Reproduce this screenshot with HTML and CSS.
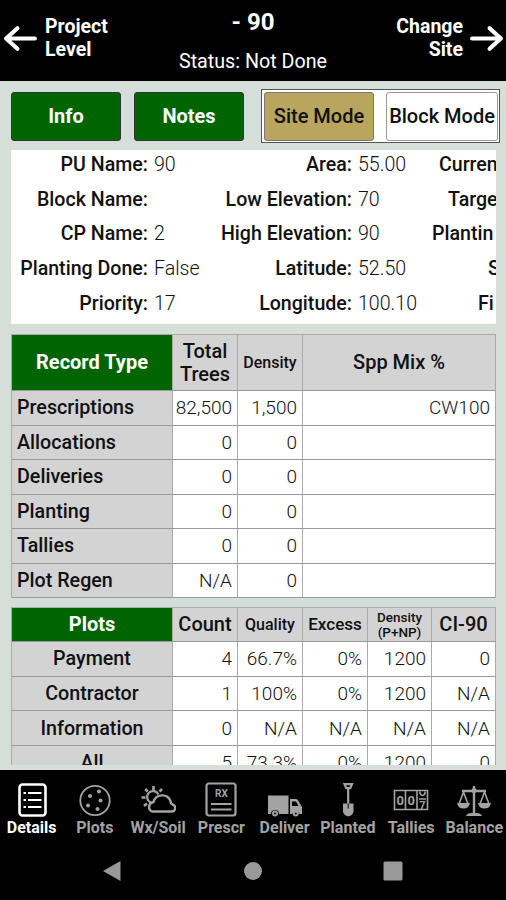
FILE: index.html
```html
<!DOCTYPE html>
<html lang="en">
<head>
    <meta charset="UTF-8">
    <meta name="viewport" content="width=device-width, initial-scale=1.0">
    <title>Site Details</title>
    <link rel="stylesheet" href="styles.css">
</head>
<body>
    <header class="top-bar">
        <div class="top-link">
            <svg class="arrow" viewBox="0 0 34 26"><path d="M31 13H3M14 3L3 13l11 10"/></svg>
            <span>Project<br>Level</span>
        </div>
        <div class="top-title">
            <h1>- 90</h1>
            <p>Status: Not Done</p>
        </div>
        <div class="top-link right">
            <span>Change<br>Site</span>
            <svg class="arrow" viewBox="0 0 34 26"><path d="M3 13h28M20 3l11 10-11 10"/></svg>
        </div>
    </header>

    <main class="content">
        <div class="buttons">
            <button class="btn green">Info</button>
            <button class="btn green">Notes</button>
            <div class="mode-switch">
                <button class="btn gold">Site Mode</button>
                <button class="btn white">Block Mode</button>
            </div>
        </div>

        <div class="info">
            <b>PU Name:</b><span>90</span><b>Area:</b><span>55.00</span><b class="cut c1">Curren</b>
            <b>Block Name:</b><span></span><b>Low Elevation:</b><span>70</span><b class="cut c2">Targe</b>
            <b>CP Name:</b><span>2</span><b>High Elevation:</b><span>90</span><b class="cut c3">Plantin</b>
            <b>Planting Done:</b><span>False</span><b>Latitude:</b><span>52.50</span><b class="cut c4">S</b>
            <b>Priority:</b><span>17</span><b>Longitude:</b><span>100.10</span><b class="cut c5">Fi</b>
        </div>

        <div class="grid records">
            <div class="head title">Record Type</div><div class="head">Total<br>Trees</div><div class="head small">Density</div><div class="head">Spp Mix %</div>
            <div class="name">Prescriptions</div><div>82,500</div><div>1,500</div><div>CW100</div>
            <div class="name">Allocations</div><div>0</div><div>0</div><div></div>
            <div class="name">Deliveries</div><div>0</div><div>0</div><div></div>
            <div class="name">Planting</div><div>0</div><div>0</div><div></div>
            <div class="name">Tallies</div><div>0</div><div>0</div><div></div>
            <div class="name">Plot Regen</div><div>N/A</div><div>0</div><div></div>
        </div>

        <div class="plots-wrap">
            <div class="grid plots">
                <div class="head title">Plots</div><div class="head">Count</div><div class="head small">Quality</div><div class="head medium">Excess</div><div class="head tiny">Density<br>(P+NP)</div><div class="head">CI-90</div>
                <div class="name">Payment</div><div>4</div><div>66.7%</div><div>0%</div><div>1200</div><div>0</div>
                <div class="name">Contractor</div><div>1</div><div>100%</div><div>0%</div><div>1200</div><div>N/A</div>
                <div class="name">Information</div><div>0</div><div>N/A</div><div>N/A</div><div>N/A</div><div>N/A</div>
                <div class="name">All</div><div>5</div><div>73.3%</div><div>0%</div><div>1200</div><div>0</div>
            </div>
        </div>
    </main>

    <nav class="tabs">
        <div class="tab active">
            <svg viewBox="0 0 36 36"><rect x="5.500" y="2.500" width="26" height="31" rx="3" stroke-width="2.600"/><path d="M14 11h13.500M14 18h13.500M14 25h13.500" stroke-width="2.200"/><path d="M9.500 11h2.500M9.500 18h2.500M9.500 25h2.500" stroke-width="2"/></svg>
            <span>Details</span>
        </div>
        <div class="tab">
            <svg viewBox="0 0 36 36"><circle cx="18" cy="18.500" r="14.700" stroke-width="1.800"/><g class="solid"><circle cx="13" cy="14" r="2"/><circle cx="22" cy="9.500" r="2"/><circle cx="23.500" cy="18.500" r="2"/><circle cx="11" cy="23.500" r="2"/><circle cx="20.500" cy="27" r="2"/></g></svg>
            <span>Plots</span>
        </div>
        <div class="tab">
            <svg viewBox="0 0 36 36"><path d="M10.500 20.500a6 6 0 1 1 8-8" stroke-width="2.200"/><path d="M13.500 4v4M5.200 7l2.500 2.500M22 7l-2.500 2.500M1.500 15.500h4M4 24l3-2.500" stroke-width="2.600"/><path d="M12 29.500h20a3.500 3.500 0 0 0 1.500-6.500q-3-1-3-4a9 9 0 0 0-17 1 5 5 0 0 0-1.500 9.500z" stroke-width="2.400"/></svg>
            <span>Wx/Soil</span>
        </div>
        <div class="tab">
            <svg viewBox="0 0 36 36"><rect x="3.500" y="1.500" width="29" height="32" rx="2.500" stroke-width="2.200"/><text x="18.500" y="15" font-size="10">RX</text><path d="M8 22h20.500M8 27.500h20.500" stroke-width="2.200"/></svg>
            <span>Prescr</span>
        </div>
        <div class="tab">
            <svg viewBox="0 0 36 36"><g class="solid"><path d="M1 13.500h20.500V32H12a4 4 0 0 0-8 0H1zM23 17h6q2 0 3 3l3 5v7h-2.500a4 4 0 0 0-7.500 0h-2z"/><circle cx="8" cy="31.500" r="3"/><circle cx="28.700" cy="31.500" r="3"/></g><path class="hole" d="M25 19.500h4l2.500 4.500H25z"/><circle class="hole" cx="8" cy="31.500" r="1"/><circle class="hole" cx="28.700" cy="31.500" r="1"/></svg>
            <span>Deliver</span>
        </div>
        <div class="tab">
            <svg viewBox="0 0 36 36"><path d="M14.500 2.200h7.500l-1.700 4h-4.100zM18.200 6v18" stroke-width="2.200"/><path class="solid" d="M13 21.500h10.500V30q-1 3.500-5.200 4.500Q14 33.500 13 30z"/><path class="hole" d="M17.700 21.500h1v5h-1z"/></svg>
            <span>Planted</span>
        </div>
        <div class="tab">
            <svg viewBox="0 0 36 36"><path d="M1.500 8.500h33v19h-33zM12.500 8.500v19M24 8.500v19" stroke-width="1.600"/><text x="7.200" y="22.500" font-size="13">0</text><text x="18.300" y="22.500" font-size="13">0</text><text x="29.500" y="27" font-size="11">7</text><path d="M27 9.500v2q2.500 4 5 0v-2M26 17h7" stroke-width="1.600"/></svg>
            <span>Tallies</span>
        </div>
        <div class="tab">
            <svg viewBox="0 0 36 36"><path d="M18 4v27M6 9h24" stroke-width="2.400"/><path d="M7.500 10L3 22M7.500 10L12 22M28.500 10L24 22M28.500 10L33 22" stroke-width="1.600"/><path class="solid" d="M1 21h13q-1 5.500-6.500 5.500T1 21zM22 21h13q-1 5.500-6.500 5.500T22 21zM10 34q1-3 6-3h4q5 0 6 3z"/><circle class="solid" cx="18" cy="8.500" r="2.500"/></svg>
            <span>Balance</span>
        </div>
    </nav>

    <footer class="system-bar">
        <svg viewBox="0 0 20 22"><path d="M18.500 1v20L1 11z"/></svg>
        <svg viewBox="0 0 20 22"><circle cx="10" cy="11" r="9"/></svg>
        <svg viewBox="0 0 20 22"><rect x=".5" y="1.500" width="19" height="19" rx="1.500"/></svg>
    </footer>
</body>
</html>
```
FILE: styles.css
```css
* {
    box-sizing: border-box;
}
body {
    margin: 0;
    width: 506px;
    height: 900px;
    display: flex;
    flex-direction: column;
    overflow: hidden;
    background: #000;
    color: #111;
    font-family: Roboto, sans-serif;
    font-size: 19px;
    white-space: nowrap;
}
.top-bar {
    height: 81px;
    display: grid;
    grid-template-columns: 150px 206px 150px;
    color: #fff;
}
.top-link {
    display: flex;
    align-items: center;
    gap: 7px;
    padding: 0 0 5px 3px;
    font-size: 19.5px;
    font-weight: 700;
    line-height: 23px;
}
.right {
    justify-content: flex-end;
    text-align: right;
    padding: 0 2px 5px 0;
}
.right .arrow {
    margin-left: -1px;
}
.arrow {
    width: 35px;
    height: 27px;
    fill: none;
    stroke: #fff;
    stroke-width: 4;
    stroke-linecap: round;
    stroke-linejoin: round;
}
.top-title {
    text-align: center;
}
.top-title h1 {
    margin: 8px 0 0;
    font-size: 24px;
    line-height: 29px;
}
.top-title p {
    margin: 13px 0 0;
    font-size: 19.7px;
    line-height: 24px;
}
.content {
    height: 689px;
    padding: 8px 10px 5px 11px;
    background: #d6deda;
    overflow: hidden;
}
.buttons {
    display: flex;
    height: 54px;
    align-items: center;
}
.btn {
    flex: none;
    width: 110px;
    height: 49px;
    padding: 0;
    border: 1px solid #333;
    border-radius: 3px;
    font: 500 20px Roboto, sans-serif;
    color: #111;
}
.green {
    margin-right: 13px;
    background: #006400;
    color: #fff;
    font-weight: 700;
}
.mode-switch {
    display: flex;
    justify-content: space-between;
    align-items: center;
    flex: none;
    width: 239px;
    height: 54px;
    margin-left: 4px;
    padding: 0 1px 0 2px;
    background: #fff;
    border: 1px solid #555;
}
.gold {
    background: #b9a55d;
    border-color: #777;
}
.white {
    width: 112px;
    background: #fff;
    border-color: #999;
}
.info {
    display: grid;
    grid-template-columns: 137px 68px 136px 73px 71px;
    grid-auto-rows: 34.7px;
    height: 174px;
    margin-top: 7px;
    overflow: hidden;
    background: #fff;
    font-size: 19.6px;
    line-height: 29px;
}
.info b {
    font-weight: 500;
    text-align: right;
}
.info span {
    padding-left: 6px;
    font-weight: 300;
}
.info .cut {
    text-align: left;
    overflow: hidden;
}
.info .c1 {
    padding-left: 14px;
}
.info .c2 {
    padding-left: 23px;
}
.info .c3 {
    padding-left: 7px;
}
.info .c4 {
    padding-left: 63px;
}
.info .c5 {
    padding-left: 53px;
}
.grid {
    display: grid;
    width: 485px;
    border-top: 1px solid #aaa;
    border-left: 1px solid #aaa;
    background: #fff;
}
.grid > div {
    display: flex;
    align-items: center;
    justify-content: flex-end;
    padding-right: 5px;
    border-right: 1px solid #aaa;
    border-bottom: 1px solid #999;
    font-weight: 300;
}
.grid .head {
    justify-content: center;
    padding: 0;
    background: #d3d3d3;
    font-size: 20px;
    font-weight: 500;
    line-height: 23px;
    text-align: center;
}
.grid .title {
    background: #006400;
    color: #fff;
    font-weight: 700;
}
.grid .name {
    background: #d3d3d3;
    font-size: 19.7px;
    font-weight: 500;
}
.grid .small {
    font-size: 16px;
}
.grid .medium {
    font-size: 17px;
}
.grid .tiny {
    font-size: 13.5px;
    line-height: 15px;
}
.records {
    margin-top: 10px;
    grid-template-columns: 161px 65px 65px 193px;
    grid-template-rows: 56px repeat(6, 34.5px);
}
.records .name {
    justify-content: flex-start;
    padding-left: 5px;
}
.plots-wrap {
    height: 158px;
    margin-top: 9px;
    overflow: hidden;
}
.plots {
    grid-template-columns: 161px 65px 65px 65px 64px 64px;
    grid-template-rows: 34px repeat(4, 34.7px);
}
.plots .name {
    justify-content: center;
    padding: 0;
}
.tabs {
    height: 72px;
    display: grid;
    grid-template-columns: repeat(8, 1fr);
    color: #a3a3a3;
}
.tab {
    display: flex;
    flex-direction: column;
    align-items: center;
    padding-top: 12px;
    font-size: 16px;
    font-weight: 700;
    line-height: 19px;
}
.tab svg {
    width: 36px;
    height: 36px;
    flex: none;
    fill: none;
    stroke: currentColor;
}
.tab text {
    fill: currentColor;
    stroke: none;
    text-anchor: middle;
    font-weight: 700;
}
.tab .solid {
    fill: currentColor;
    stroke: none;
}
.tab .hole {
    fill: #000;
    stroke: none;
}
.active {
    color: #fff;
}
.system-bar {
    height: 58px;
    display: flex;
    justify-content: space-between;
    align-items: center;
    padding: 0 103px 0 102px;
}
.system-bar svg {
    width: 20px;
    height: 22px;
    fill: #999;
}
```
